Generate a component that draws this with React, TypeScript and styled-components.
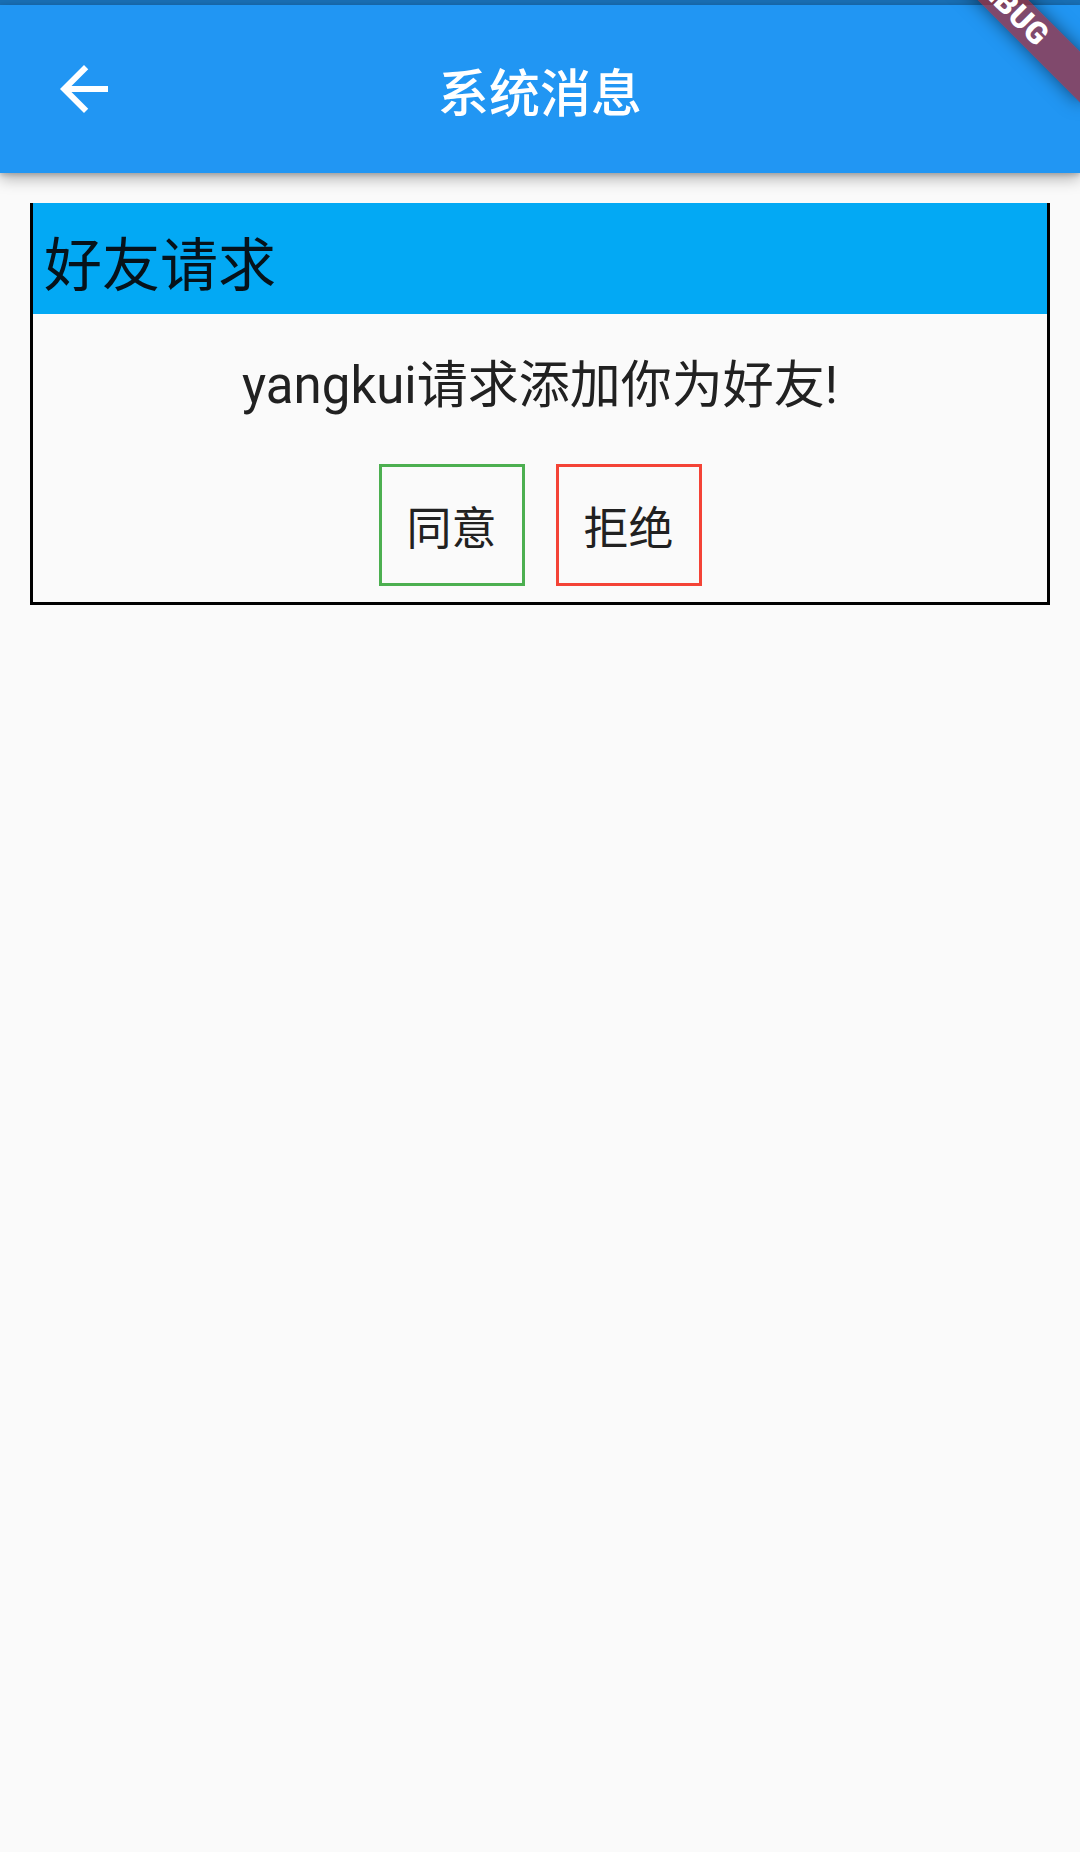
import React from "react";
import styled, { createGlobalStyle } from "styled-components";

const GlobalStyle = createGlobalStyle`
  html, body {
    margin: 0;
    padding: 0;
    background: #fafafa;
  }
  * { box-sizing: border-box; }
`;

const Screen = styled.div`
  position: relative;
  width: 1080px;
  height: 1852px;
  overflow: hidden;
  background: #fafafa;
  font-family: Roboto, "Noto Sans CJK SC", sans-serif;
`;

const StatusStrip = styled.div`
  height: 5px;
  background: #1970b6;
`;

const AppBar = styled.header`
  position: relative;
  z-index: 1;
  height: 168px;
  display: grid;
  grid-template-columns: 168px 1fr 168px;
  align-items: center;
  background: #2196f3;
  box-shadow: 0 6px 14px rgba(0, 0, 0, 0.28), 0 2px 5px rgba(0, 0, 0, 0.18);
`;

const BackButton = styled.button`
  width: 168px;
  height: 168px;
  display: flex;
  align-items: center;
  justify-content: center;
  padding: 0;
  border: none;
  background: transparent;
  color: #fff;
`;

const Title = styled.h1`
  margin: 0;
  text-align: center;
  color: #fff;
  font-size: 51px;
  font-weight: 500;
  line-height: 1;
  padding-top: 10px;
`;

const Content = styled.main`
  padding: 30px;
`;

const Card = styled.section`
  border: 3px solid #000;
  border-top: none;
`;

const CardHeader = styled.div`
  height: 111px;
  display: flex;
  align-items: center;
  padding: 4px 0 0 11px;
  background: #03a9f4;
  color: #06121a;
  font-size: 58px;
`;

const CardBody = styled.div`
  display: flex;
  flex-direction: column;
  align-items: center;
  padding: 42px 0 16px;
`;

const Message = styled.p`
  margin: 0;
  color: #212121;
  font-size: 51px;
  line-height: 60px;
`;

const Actions = styled.div`
  display: flex;
  gap: 31px;
  margin-top: 48px;
`;

const ActionButton = styled.button<{ $tone: string }>`
  width: 146px;
  height: 122px;
  display: flex;
  align-items: center;
  justify-content: center;
  padding: 0;
  border: 3px solid ${(p) => p.$tone};
  background: transparent;
  color: #212121;
  font-family: Roboto, "Noto Sans CJK SC", sans-serif;
  font-size: 45px;
`;

const DebugBanner = styled.div`
  position: absolute;
  left: 888px;
  top: -13px;
  width: 240px;
  height: 36px;
  transform: rotate(45deg);
  background: rgba(183, 28, 28, 0.63);
  box-shadow: 0 0 18px rgba(0, 0, 0, 0.5);
  color: #fff;
  font-family: Roboto, "Liberation Sans", sans-serif;
  font-weight: 900;
  font-size: 30.6px;
  line-height: 36px;
  text-align: center;
  letter-spacing: 0.5px;
  z-index: 5;
`;

const ArrowBack = () => (
  <svg width="72" height="72" viewBox="0 0 24 24" fill="currentColor">
    <path d="M20 11H7.83l5.59-5.59L12 4l-8 8 8 8 1.41-1.41L7.83 13H20v-2z" />
  </svg>
);

export default function App() {
  return (
    <Screen>
      <GlobalStyle />
      <StatusStrip />
      <AppBar>
        <BackButton aria-label="返回">
          <ArrowBack />
        </BackButton>
        <Title>系统消息</Title>
        <span />
      </AppBar>
      <Content>
        <Card>
          <CardHeader>好友请求</CardHeader>
          <CardBody>
            <Message>yangkui请求添加你为好友!</Message>
            <Actions>
              <ActionButton $tone="#4caf50">同意</ActionButton>
              <ActionButton $tone="#f44336">拒绝</ActionButton>
            </Actions>
          </CardBody>
        </Card>
      </Content>
      <DebugBanner>DEBUG</DebugBanner>
    </Screen>
  );
}
